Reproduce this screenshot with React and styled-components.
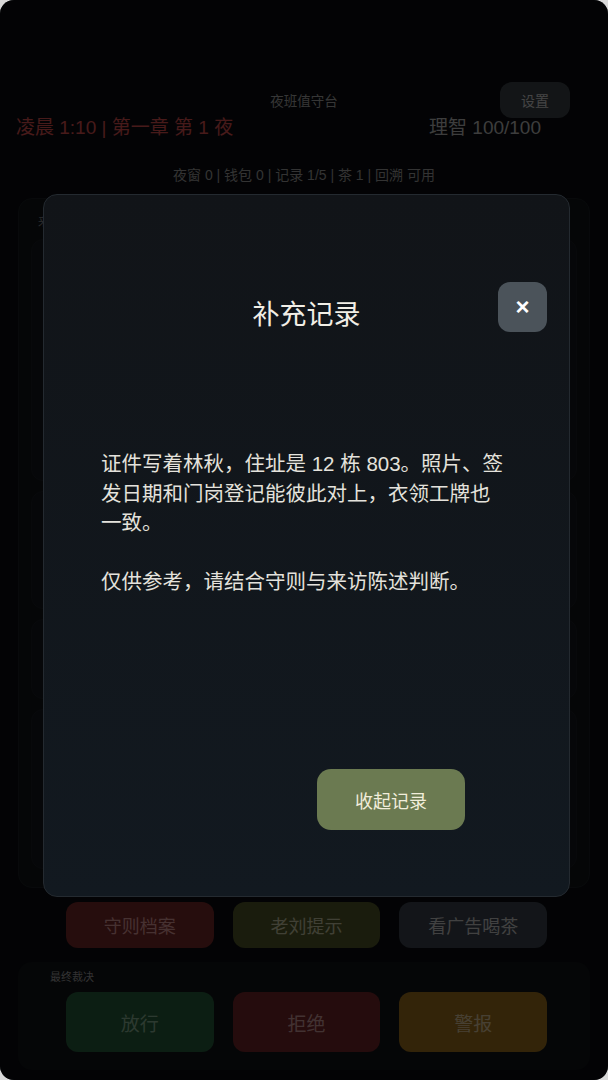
import React from "react"
import styled, { createGlobalStyle } from "styled-components"

const GlobalStyle = createGlobalStyle`
  html, body {
    margin: 0;
    padding: 0;
    background: #d9d9d9;
  }
  body {
    font-family: "Liberation Sans", "Noto Sans CJK SC", sans-serif;
  }
  * {
    box-sizing: border-box;
  }
`

const tones = {
  red: { bg: "#742828", fg: "#d49494" },
  olive: { bg: "#515628", fg: "#c2c2a2" },
  slate: { bg: "#3a424c", fg: "#c4c4c4" },
  green: { bg: "#265c3a", fg: "#86ae92" },
  crimson: { bg: "#722628", fg: "#c89898" },
  amber: { bg: "#9a6e1e", fg: "#d8c29a" },
}

const App = () => {
  return (
    <>
      <GlobalStyle />
      <Screen>
        <Header>
          <TopRow>
            <span />
            <StationName>夜班值守台</StationName>
            <SettingsButton>设置</SettingsButton>
          </TopRow>
          <InfoRow>
            <TimeText>凌晨 1:10 | 第一章 第 1 夜</TimeText>
            <SanityText>理智 100/100</SanityText>
          </InfoRow>
        </Header>

        <StatusLine>夜窗 0 | 钱包 0 | 记录 1/5 | 茶 1 | 回溯 可用</StatusLine>

        <MainPanel>
          <PanelLabel>来访对象</PanelLabel>
          <Card $height={242} />
          <Card $height={118} />
          <Card $height={80} />
          <Card $height={160} />
        </MainPanel>

        <ActionRow>
          <ActionButton $tone="red">守则档案</ActionButton>
          <ActionButton $tone="olive">老刘提示</ActionButton>
          <ActionButton $tone="slate">看广告喝茶</ActionButton>
        </ActionRow>

        <VerdictPanel>
          <VerdictLabel>最终裁决</VerdictLabel>
          <VerdictRow>
            <VerdictButton $tone="green">放行</VerdictButton>
            <VerdictButton $tone="crimson">拒绝</VerdictButton>
            <VerdictButton $tone="amber">警报</VerdictButton>
          </VerdictRow>
        </VerdictPanel>

        <Overlay>
          <Modal>
            <ModalHeader>
              <span />
              <ModalTitle>补充记录</ModalTitle>
              <CloseButton>×</CloseButton>
            </ModalHeader>
            <ModalBody>
              <p>
                证件写着林秋，住址是 12 栋 803。照片、签发日期和门岗登记能彼此对上，衣领工牌也一致。
              </p>
              <p>仅供参考，请结合守则与来访陈述判断。</p>
            </ModalBody>
            <ModalFooter>
              <PrimaryButton>收起记录</PrimaryButton>
            </ModalFooter>
          </Modal>
        </Overlay>
      </Screen>
    </>
  )
}

const Screen = styled.div`
  position: relative;
  width: 608px;
  height: 1080px;
  overflow: hidden;
  border-radius: 14px;
  background: #0a0c10;
  padding: 82px 16px 0;
  display: flex;
  flex-direction: column;
`

const Header = styled.header`
  display: flex;
  flex-direction: column;
`

const TopRow = styled.div`
  display: grid;
  grid-template-columns: 1fr auto 1fr;
  align-items: center;
`

const StationName = styled.div`
  font-size: 13.5px;
  color: #a4a4a4;
`

const SettingsButton = styled.button`
  justify-self: end;
  margin-right: 22px;
  width: 70px;
  height: 36px;
  border: none;
  border-radius: 12px;
  background: #3c4248;
  color: #cfcfcf;
  font-family: inherit;
  font-size: 14px;
`

const InfoRow = styled.div`
  display: flex;
  justify-content: space-between;
  align-items: center;
  line-height: 20px;
  padding-right: 51px;
`

const TimeText = styled.div`
  font-size: 19px;
  color: #d85050;
`

const SanityText = styled.div`
  font-size: 19px;
  color: #b8b8b8;
`

const StatusLine = styled.div`
  margin-top: 28px;
  text-align: center;
  font-size: 14px;
  line-height: 18px;
  color: #9a9a9a;
`

const MainPanel = styled.section`
  margin: 14px 2px 0;
  height: 690px;
  padding: 14px 12px;
  border-radius: 14px;
  background: #111418;
  border: 1px solid #1a1e23;
  display: flex;
  flex-direction: column;
  gap: 10px;
`

const PanelLabel = styled.div`
  font-size: 11px;
  color: #8a8a8a;
  padding-left: 7px;
`

const Card = styled.div`
  height: ${(p) => p.$height}px;
  border-radius: 12px;
  background: #14171c;
  border: 1px solid #1a1e23;
`

const ActionRow = styled.div`
  margin-top: 14px;
  padding: 0 45px 0 50px;
  display: grid;
  grid-template-columns: repeat(3, 1fr);
  gap: 19px;
`

const ActionButton = styled.button`
  height: 46px;
  border: none;
  border-radius: 12px;
  background: ${(p) => tones[p.$tone].bg};
  color: ${(p) => tones[p.$tone].fg};
  font-family: inherit;
  font-size: 18px;
`

const VerdictPanel = styled.section`
  margin: 14px 2px 0;
  padding: 8px 43px 18px 32px;
  border-radius: 14px;
  background: #111317;
  display: flex;
  flex-direction: column;
  gap: 8px;
`

const VerdictLabel = styled.div`
  font-size: 11px;
  line-height: 14px;
  color: #9a9a9a;
`

const VerdictRow = styled.div`
  padding-left: 16px;
  display: grid;
  grid-template-columns: repeat(3, 1fr);
  gap: 19px;
`

const VerdictButton = styled(ActionButton)`
  height: 60px;
  font-size: 19px;
`

const Overlay = styled.div`
  position: absolute;
  inset: 0;
  background: rgba(0, 0, 0, 0.67);
  display: flex;
  justify-content: center;
  align-items: flex-start;
  padding: 194px 38px 0 43px;
`

const Modal = styled.div`
  width: 527px;
  height: 703px;
  border-radius: 14px;
  background: linear-gradient(180deg, #111418 0%, #121920 100%);
  border: 1px solid #242a30;
  padding: 87px 22px 0;
  display: flex;
  flex-direction: column;
`

const ModalHeader = styled.div`
  display: grid;
  grid-template-columns: 49px 1fr 49px;
  align-items: center;
`

const ModalTitle = styled.h2`
  margin: 0;
  text-align: center;
  font-size: 27px;
  font-weight: 400;
  color: #f1eee6;
  transform: translateY(5px);
`

const CloseButton = styled.button`
  width: 49px;
  height: 50px;
  border: none;
  border-radius: 12px;
  background: #4b535a;
  color: #ffffff;
  font-family: "Liberation Sans", sans-serif;
  font-weight: 700;
  font-size: 24px;
  line-height: 1;
  padding: 0;
`

const ModalBody = styled.div`
  margin-top: 117px;
  padding: 0 41px 0 35px;
  font-size: 20.5px;
  line-height: 29.5px;
  color: #e4e2dc;

  p {
    margin: 0 0 29.5px;
  }
`

const ModalFooter = styled.div`
  margin-top: 143px;
  display: flex;
  justify-content: flex-end;
  padding-right: 82px;
`

const PrimaryButton = styled.button`
  width: 148px;
  height: 61px;
  border: none;
  border-radius: 14px;
  background: #6b7a51;
  color: #f1eddb;
  font-family: inherit;
  font-size: 18px;
`

export default App
